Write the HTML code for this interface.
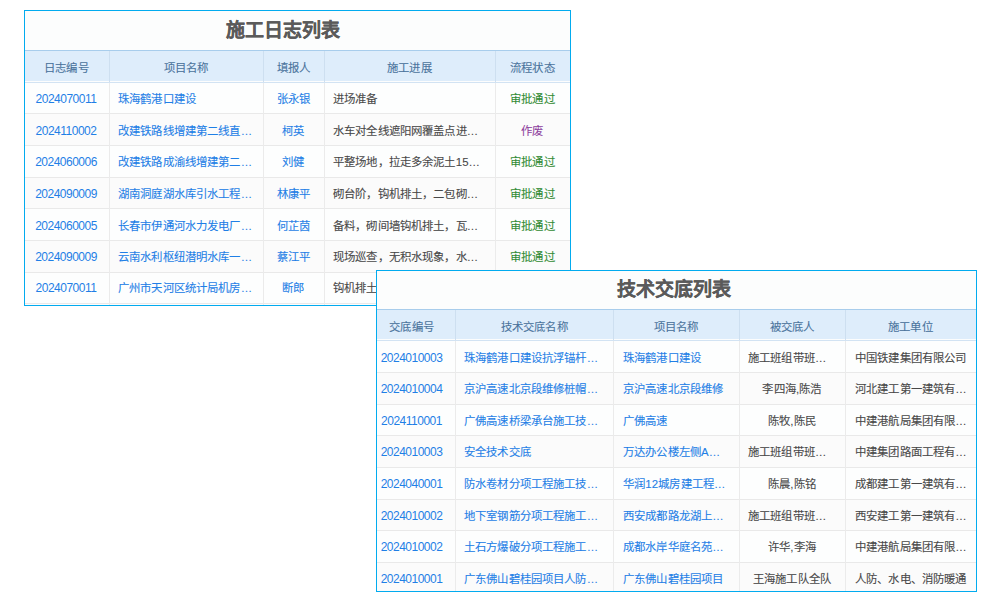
<!DOCTYPE html>
<html lang="zh-CN"><head><meta charset="utf-8"><style>
html,body{margin:0;padding:0;background:#ffffff;width:1000px;height:600px;overflow:hidden;position:relative}
body{font-family:"Liberation Sans",sans-serif;}
.tb{position:absolute;border:1px solid #02abef;background:#fcfdfd;overflow:hidden}
.tb div{position:absolute}
.title{font-size:19px;font-weight:bold;color:#5a5a5a;-webkit-text-stroke:0.15px currentColor;line-height:22px;white-space:nowrap}
.hdr{left:0;background:#deedfb}
.row{left:0}
.hl{left:0;height:1px}
.vl{width:1px}
.t{font-size:11.4px;line-height:20px;height:20px;white-space:nowrap;letter-spacing:0.15px;-webkit-text-stroke:0.1px currentColor}
.c{width:200px;text-align:center}
.d{font-size:12px;letter-spacing:-0.5px;-webkit-text-stroke:0}
</style></head><body>
<div class="tb" style="left:24px;top:10px;width:545px;height:294px">
<div class="title" style="left:201px;top:8.5px">施工日志列表</div>
<div class="hdr" style="top:39px;height:31px;width:545px"></div>
<div class="hl" style="top:39px;width:545px;background:#a8cdec"></div>
<div class="hl" style="top:71px;width:545px;background:#d2e3f3"></div>
<div class="row" style="top:72.00px;height:30.00px;width:545px;background:#fdfefe"></div>
<div class="hl" style="top:102.00px;width:545px;background:#e9e9e9"></div>
<div class="row" style="top:103.00px;height:31.00px;width:545px;background:#fbfbfb"></div>
<div class="hl" style="top:134.00px;width:545px;background:#e9e9e9"></div>
<div class="row" style="top:135.00px;height:31.00px;width:545px;background:#fdfefe"></div>
<div class="hl" style="top:166.00px;width:545px;background:#e9e9e9"></div>
<div class="row" style="top:167.00px;height:30.00px;width:545px;background:#fbfbfb"></div>
<div class="hl" style="top:197.00px;width:545px;background:#e9e9e9"></div>
<div class="row" style="top:198.00px;height:31.00px;width:545px;background:#fdfefe"></div>
<div class="hl" style="top:229.00px;width:545px;background:#e9e9e9"></div>
<div class="row" style="top:230.00px;height:31.00px;width:545px;background:#fbfbfb"></div>
<div class="hl" style="top:261.00px;width:545px;background:#e9e9e9"></div>
<div class="row" style="top:262.00px;height:30.00px;width:545px;background:#fdfefe"></div>
<div class="hl" style="top:292.00px;width:545px;background:#e9e9e9"></div>
<div class="vl" style="left:84px;top:40px;height:31px;background:#cddff0"></div>
<div class="vl" style="left:84px;top:72px;height:222px;background:#ebebeb"></div>
<div class="vl" style="left:238px;top:40px;height:31px;background:#cddff0"></div>
<div class="vl" style="left:238px;top:72px;height:222px;background:#ebebeb"></div>
<div class="vl" style="left:299px;top:40px;height:31px;background:#cddff0"></div>
<div class="vl" style="left:299px;top:72px;height:222px;background:#ebebeb"></div>
<div class="vl" style="left:470px;top:40px;height:31px;background:#cddff0"></div>
<div class="vl" style="left:470px;top:72px;height:222px;background:#ebebeb"></div>
<div class="t c" style="left:-58.5px;top:47.00px;color:#4a739c">日志编号</div>
<div class="t c" style="left:61px;top:47.00px;color:#4a739c">项目名称</div>
<div class="t c" style="left:168.5px;top:47.00px;color:#4a739c">填报人</div>
<div class="t c" style="left:284.5px;top:47.00px;color:#4a739c">施工进展</div>
<div class="t c" style="left:407.5px;top:47.00px;color:#4a739c">流程状态</div>
<div class="t d c" style="left:-59px;top:78.00px;color:#1f7fe6">2024070011</div>
<div class="t" style="left:93px;top:78.00px;color:#1f7fe6">珠海鹤港口建设</div>
<div class="t c" style="left:168.5px;top:78.00px;color:#1f7fe6">张永银</div>
<div class="t" style="left:308px;top:78.00px;color:#484848">进场准备</div>
<div class="t c" style="left:407.5px;top:78.00px;color:#318b34">审批通过</div>
<div class="t d c" style="left:-59px;top:109.50px;color:#1f7fe6">2024110002</div>
<div class="t" style="left:93px;top:109.50px;color:#1f7fe6">改建铁路线增建第二线直…</div>
<div class="t c" style="left:168.5px;top:109.50px;color:#1f7fe6">柯英</div>
<div class="t" style="left:308px;top:109.50px;color:#484848">水车对全线遮阳网覆盖点进…</div>
<div class="t c" style="left:407.5px;top:109.50px;color:#8e3f9e">作废</div>
<div class="t d c" style="left:-59px;top:140.90px;color:#1f7fe6">2024060006</div>
<div class="t" style="left:93px;top:140.90px;color:#1f7fe6">改建铁路成渝线增建第二…</div>
<div class="t c" style="left:168.5px;top:140.90px;color:#1f7fe6">刘健</div>
<div class="t" style="left:308px;top:140.90px;color:#484848">平整场地，拉走多余泥土15…</div>
<div class="t c" style="left:407.5px;top:140.90px;color:#318b34">审批通过</div>
<div class="t d c" style="left:-59px;top:173.30px;color:#1f7fe6">2024090009</div>
<div class="t" style="left:93px;top:173.30px;color:#1f7fe6">湖南洞庭湖水库引水工程…</div>
<div class="t c" style="left:168.5px;top:173.30px;color:#1f7fe6">林康平</div>
<div class="t" style="left:308px;top:173.30px;color:#484848">砌台阶，钩机排土，二包砌…</div>
<div class="t c" style="left:407.5px;top:173.30px;color:#318b34">审批通过</div>
<div class="t d c" style="left:-59px;top:204.80px;color:#1f7fe6">2024060005</div>
<div class="t" style="left:93px;top:204.80px;color:#1f7fe6">长春市伊通河水力发电厂…</div>
<div class="t c" style="left:168.5px;top:204.80px;color:#1f7fe6">何芷茵</div>
<div class="t" style="left:308px;top:204.80px;color:#484848">备料，砌间墙钩机排土，瓦…</div>
<div class="t c" style="left:407.5px;top:204.80px;color:#318b34">审批通过</div>
<div class="t d c" style="left:-59px;top:236.00px;color:#1f7fe6">2024090009</div>
<div class="t" style="left:93px;top:236.00px;color:#1f7fe6">云南水利枢纽潜明水库一…</div>
<div class="t c" style="left:168.5px;top:236.00px;color:#1f7fe6">蔡江平</div>
<div class="t" style="left:308px;top:236.00px;color:#484848">现场巡查，无积水现象，水…</div>
<div class="t c" style="left:407.5px;top:236.00px;color:#318b34">审批通过</div>
<div class="t d c" style="left:-59px;top:267.40px;color:#1f7fe6">2024070011</div>
<div class="t" style="left:93px;top:267.40px;color:#1f7fe6">广州市天河区统计局机房…</div>
<div class="t c" style="left:168.5px;top:267.40px;color:#1f7fe6">断郎</div>
<div class="t" style="left:308px;top:267.40px;color:#484848">钩机排土，清理现场…</div>
<div class="t c" style="left:407.5px;top:267.40px;color:#318b34">审批通过</div>
</div>
<div class="tb" style="left:376px;top:270px;width:599px;height:320px">
<div class="title" style="left:240px;top:7.5px">技术交底列表</div>
<div class="hdr" style="top:38px;height:30px;width:599px"></div>
<div class="hl" style="top:38px;width:599px;background:#a8cdec"></div>
<div class="hl" style="top:69px;width:599px;background:#d2e3f3"></div>
<div class="row" style="top:70.00px;height:31.00px;width:599px;background:#fdfefe"></div>
<div class="hl" style="top:101.00px;width:599px;background:#e9e9e9"></div>
<div class="row" style="top:102.00px;height:31.00px;width:599px;background:#fbfbfb"></div>
<div class="hl" style="top:133.00px;width:599px;background:#e9e9e9"></div>
<div class="row" style="top:134.00px;height:30.00px;width:599px;background:#fdfefe"></div>
<div class="hl" style="top:164.00px;width:599px;background:#e9e9e9"></div>
<div class="row" style="top:165.00px;height:31.00px;width:599px;background:#fbfbfb"></div>
<div class="hl" style="top:196.00px;width:599px;background:#e9e9e9"></div>
<div class="row" style="top:197.00px;height:31.00px;width:599px;background:#fdfefe"></div>
<div class="hl" style="top:228.00px;width:599px;background:#e9e9e9"></div>
<div class="row" style="top:229.00px;height:30.00px;width:599px;background:#fbfbfb"></div>
<div class="hl" style="top:259.00px;width:599px;background:#e9e9e9"></div>
<div class="row" style="top:260.00px;height:31.00px;width:599px;background:#fdfefe"></div>
<div class="hl" style="top:291.00px;width:599px;background:#e9e9e9"></div>
<div class="row" style="top:292.00px;height:28.00px;width:599px;background:#fbfbfb"></div>
<div class="hl" style="top:320.00px;width:599px;background:#e9e9e9"></div>
<div class="vl" style="left:78px;top:39px;height:30px;background:#cddff0"></div>
<div class="vl" style="left:78px;top:70px;height:250px;background:#ebebeb"></div>
<div class="vl" style="left:236px;top:39px;height:30px;background:#cddff0"></div>
<div class="vl" style="left:236px;top:70px;height:250px;background:#ebebeb"></div>
<div class="vl" style="left:362px;top:39px;height:30px;background:#cddff0"></div>
<div class="vl" style="left:362px;top:70px;height:250px;background:#ebebeb"></div>
<div class="vl" style="left:468px;top:39px;height:30px;background:#cddff0"></div>
<div class="vl" style="left:468px;top:70px;height:250px;background:#ebebeb"></div>
<div class="t c" style="left:-65.39999999999998px;top:45.50px;color:#4a739c">交底编号</div>
<div class="t c" style="left:57.299999999999955px;top:45.50px;color:#4a739c">技术交底名称</div>
<div class="t c" style="left:199px;top:45.50px;color:#4a739c">项目名称</div>
<div class="t c" style="left:315px;top:45.50px;color:#4a739c">被交底人</div>
<div class="t c" style="left:433.5px;top:45.50px;color:#4a739c">施工单位</div>
<div class="t d c" style="left:-65.5px;top:76.50px;color:#1f7fe6">2024010003</div>
<div class="t" style="left:87px;top:76.50px;color:#1f7fe6">珠海鹤港口建设抗浮锚杆…</div>
<div class="t" style="left:246px;top:76.50px;color:#1f7fe6">珠海鹤港口建设</div>
<div class="t" style="left:371px;top:76.50px;color:#484848">施工班组带班…</div>
<div class="t" style="left:478px;top:76.50px;color:#484848">中国铁建集团有限公司</div>
<div class="t d c" style="left:-65.5px;top:108.30px;color:#1f7fe6">2024010004</div>
<div class="t" style="left:87px;top:108.30px;color:#1f7fe6">京沪高速北京段维修桩帽…</div>
<div class="t" style="left:246px;top:108.30px;color:#1f7fe6">京沪高速北京段维修</div>
<div class="t c" style="left:315px;top:108.30px;color:#484848">李四海,陈浩</div>
<div class="t" style="left:478px;top:108.30px;color:#484848">河北建工第一建筑有…</div>
<div class="t d c" style="left:-65.5px;top:139.80px;color:#1f7fe6">2024110001</div>
<div class="t" style="left:87px;top:139.80px;color:#1f7fe6">广佛高速桥梁承台施工技…</div>
<div class="t" style="left:246px;top:139.80px;color:#1f7fe6">广佛高速</div>
<div class="t c" style="left:315px;top:139.80px;color:#484848">陈牧,陈民</div>
<div class="t" style="left:478px;top:139.80px;color:#484848">中建港航局集团有限…</div>
<div class="t d c" style="left:-65.5px;top:171.20px;color:#1f7fe6">2024010003</div>
<div class="t" style="left:87px;top:171.20px;color:#1f7fe6">安全技术交底</div>
<div class="t" style="left:246px;top:171.20px;color:#1f7fe6">万达办公楼左侧A…</div>
<div class="t" style="left:371px;top:171.20px;color:#484848">施工班组带班…</div>
<div class="t" style="left:478px;top:171.20px;color:#484848">中建集团路面工程有…</div>
<div class="t d c" style="left:-65.5px;top:203.00px;color:#1f7fe6">2024040001</div>
<div class="t" style="left:87px;top:203.00px;color:#1f7fe6">防水卷材分项工程施工技…</div>
<div class="t" style="left:246px;top:203.00px;color:#1f7fe6">华润12城房建工程…</div>
<div class="t c" style="left:315px;top:203.00px;color:#484848">陈晨,陈铭</div>
<div class="t" style="left:478px;top:203.00px;color:#484848">成都建工第一建筑有…</div>
<div class="t d c" style="left:-65.5px;top:234.80px;color:#1f7fe6">2024010002</div>
<div class="t" style="left:87px;top:234.80px;color:#1f7fe6">地下室钢筋分项工程施工…</div>
<div class="t" style="left:246px;top:234.80px;color:#1f7fe6">西安成都路龙湖上…</div>
<div class="t" style="left:371px;top:234.80px;color:#484848">施工班组带班…</div>
<div class="t" style="left:478px;top:234.80px;color:#484848">西安建工第一建筑有…</div>
<div class="t d c" style="left:-65.5px;top:266.00px;color:#1f7fe6">2024010002</div>
<div class="t" style="left:87px;top:266.00px;color:#1f7fe6">土石方爆破分项工程施工…</div>
<div class="t" style="left:246px;top:266.00px;color:#1f7fe6">成都水岸华庭名苑…</div>
<div class="t c" style="left:315px;top:266.00px;color:#484848">许华,李海</div>
<div class="t" style="left:478px;top:266.00px;color:#484848">中建港航局集团有限…</div>
<div class="t d c" style="left:-65.5px;top:298.00px;color:#1f7fe6">2024010001</div>
<div class="t" style="left:87px;top:298.00px;color:#1f7fe6">广东佛山碧桂园项目人防…</div>
<div class="t" style="left:246px;top:298.00px;color:#1f7fe6">广东佛山碧桂园项目</div>
<div class="t c" style="left:315px;top:298.00px;color:#484848">王海施工队全队</div>
<div class="t" style="left:478px;top:298.00px;color:#484848">人防、水电、消防暖通</div>
</div>
</body></html>
